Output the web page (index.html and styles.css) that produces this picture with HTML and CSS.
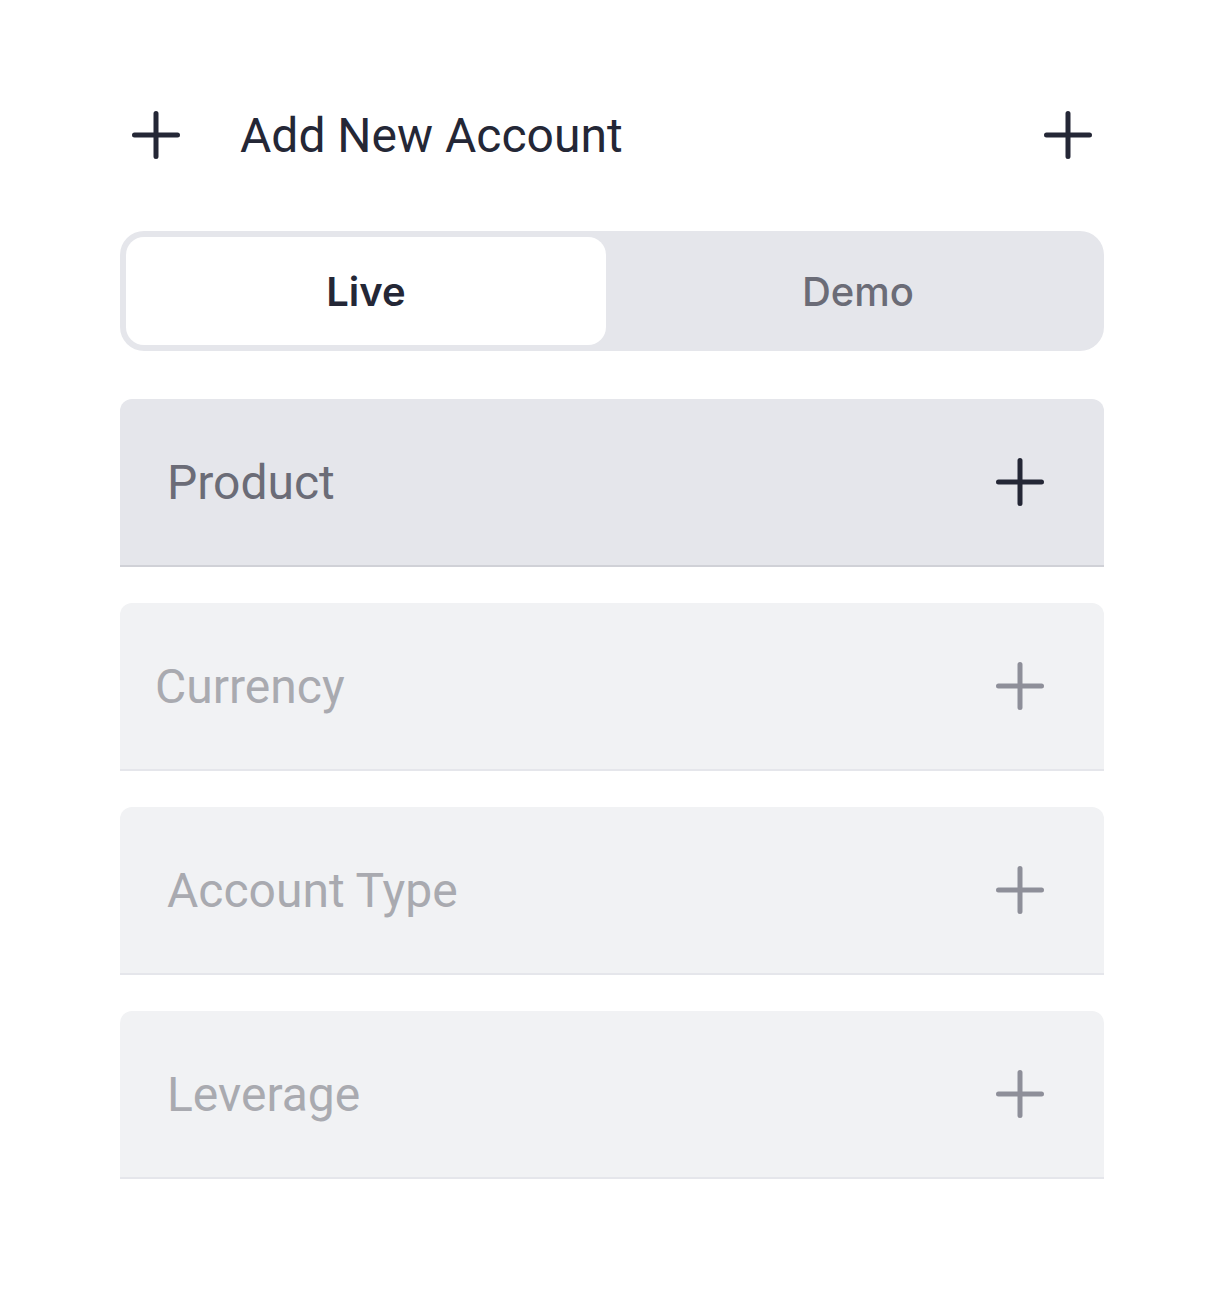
FILE: index.html
```html
<!DOCTYPE html>
<html lang="en">
<head>
<meta charset="utf-8">
<title>Add New Account</title>
<link rel="stylesheet" href="styles.css">
</head>
<body>
<main class="panel">
  <header class="header">
    <svg class="icon icon-dark" viewBox="0 0 48 48" aria-hidden="true"><path d="M24 2.5v43M2.5 24h43"/></svg>
    <h1 class="title">Add New Account</h1>
    <svg class="icon icon-dark" viewBox="0 0 48 48" aria-hidden="true"><path d="M24 2.5v43M2.5 24h43"/></svg>
  </header>

  <div class="toggle">
    <button class="seg seg-active">Live</button>
    <button class="seg">Demo</button>
  </div>

  <div class="fields">
    <div class="field field-active">
      <span class="label">Product</span>
      <svg class="icon icon-dark" viewBox="0 0 48 48" aria-hidden="true"><path d="M24 2.5v43M2.5 24h43"/></svg>
    </div>
    <div class="field field-muted field-tight">
      <span class="label">Currency</span>
      <svg class="icon icon-grey" viewBox="0 0 48 48" aria-hidden="true"><path d="M24 2.5v43M2.5 24h43"/></svg>
    </div>
    <div class="field field-muted">
      <span class="label">Account Type</span>
      <svg class="icon icon-grey" viewBox="0 0 48 48" aria-hidden="true"><path d="M24 2.5v43M2.5 24h43"/></svg>
    </div>
    <div class="field field-muted">
      <span class="label">Leverage</span>
      <svg class="icon icon-grey" viewBox="0 0 48 48" aria-hidden="true"><path d="M24 2.5v43M2.5 24h43"/></svg>
    </div>
  </div>
</main>
</body>
</html>
```
FILE: styles.css
```css
* { box-sizing: border-box; }

html, body {
  margin: 0;
  padding: 0;
  background: #ffffff;
}

body {
  font-family: Roboto, "Liberation Sans", sans-serif;
  color: #242736;
}

.panel {
  width: 984px;
  margin: 0 0 0 120px;
  padding-top: 87px;
  display: flex;
  flex-direction: column;
}

.icon {
  width: 48px;
  height: 48px;
  flex: 0 0 48px;
  fill: none;
  stroke-width: 5;
  stroke-linecap: round;
}
.icon-dark { stroke: #242736; }
.icon-grey { stroke: #8e8f99; }

.header {
  height: 96px;
  display: flex;
  align-items: center;
  padding: 0 12px;
}

.title {
  margin: 0 0 0 60px;
  flex: 1;
  font-family: Roboto, "Liberation Sans", sans-serif;
  font-size: 48px;
  font-weight: 400;
  color: #242736;
}

.toggle {
  margin-top: 48px;
  height: 120px;
  background: #e5e6eb;
  border-radius: 24px;
  padding: 6px;
  display: grid;
  grid-template-columns: 1fr 1fr;
  gap: 12px;
}

.seg {
  border: 0;
  border-radius: 18px;
  background: transparent;
  font-family: Inter, "Noto Sans", sans-serif;
  font-size: 40px;
  font-weight: 500;
  color: #6b6c77;
  padding: 0;
  cursor: pointer;
}
.seg-active {
  background: #ffffff;
  color: #242736;
  font-weight: 600;
}

.fields {
  margin-top: 48px;
  display: flex;
  flex-direction: column;
  gap: 36px;
}

.field {
  height: 168px;
  border-radius: 12px 12px 0 0;
  border-bottom: 2px solid #e5e6eb;
  background: #f1f2f4;
  display: flex;
  align-items: center;
  justify-content: space-between;
  padding: 0 60px 0 47px;
}
.field-active {
  background: #e5e6eb;
  border-bottom-color: #d0d1d7;
}
.field-tight { padding-left: 35px; }

.label {
  font-family: Roboto, "Liberation Sans", sans-serif;
  font-size: 48px;
  font-weight: 400;
  color: #a9aab0;
}
.field-active .label { color: #6b6c77; }
```
